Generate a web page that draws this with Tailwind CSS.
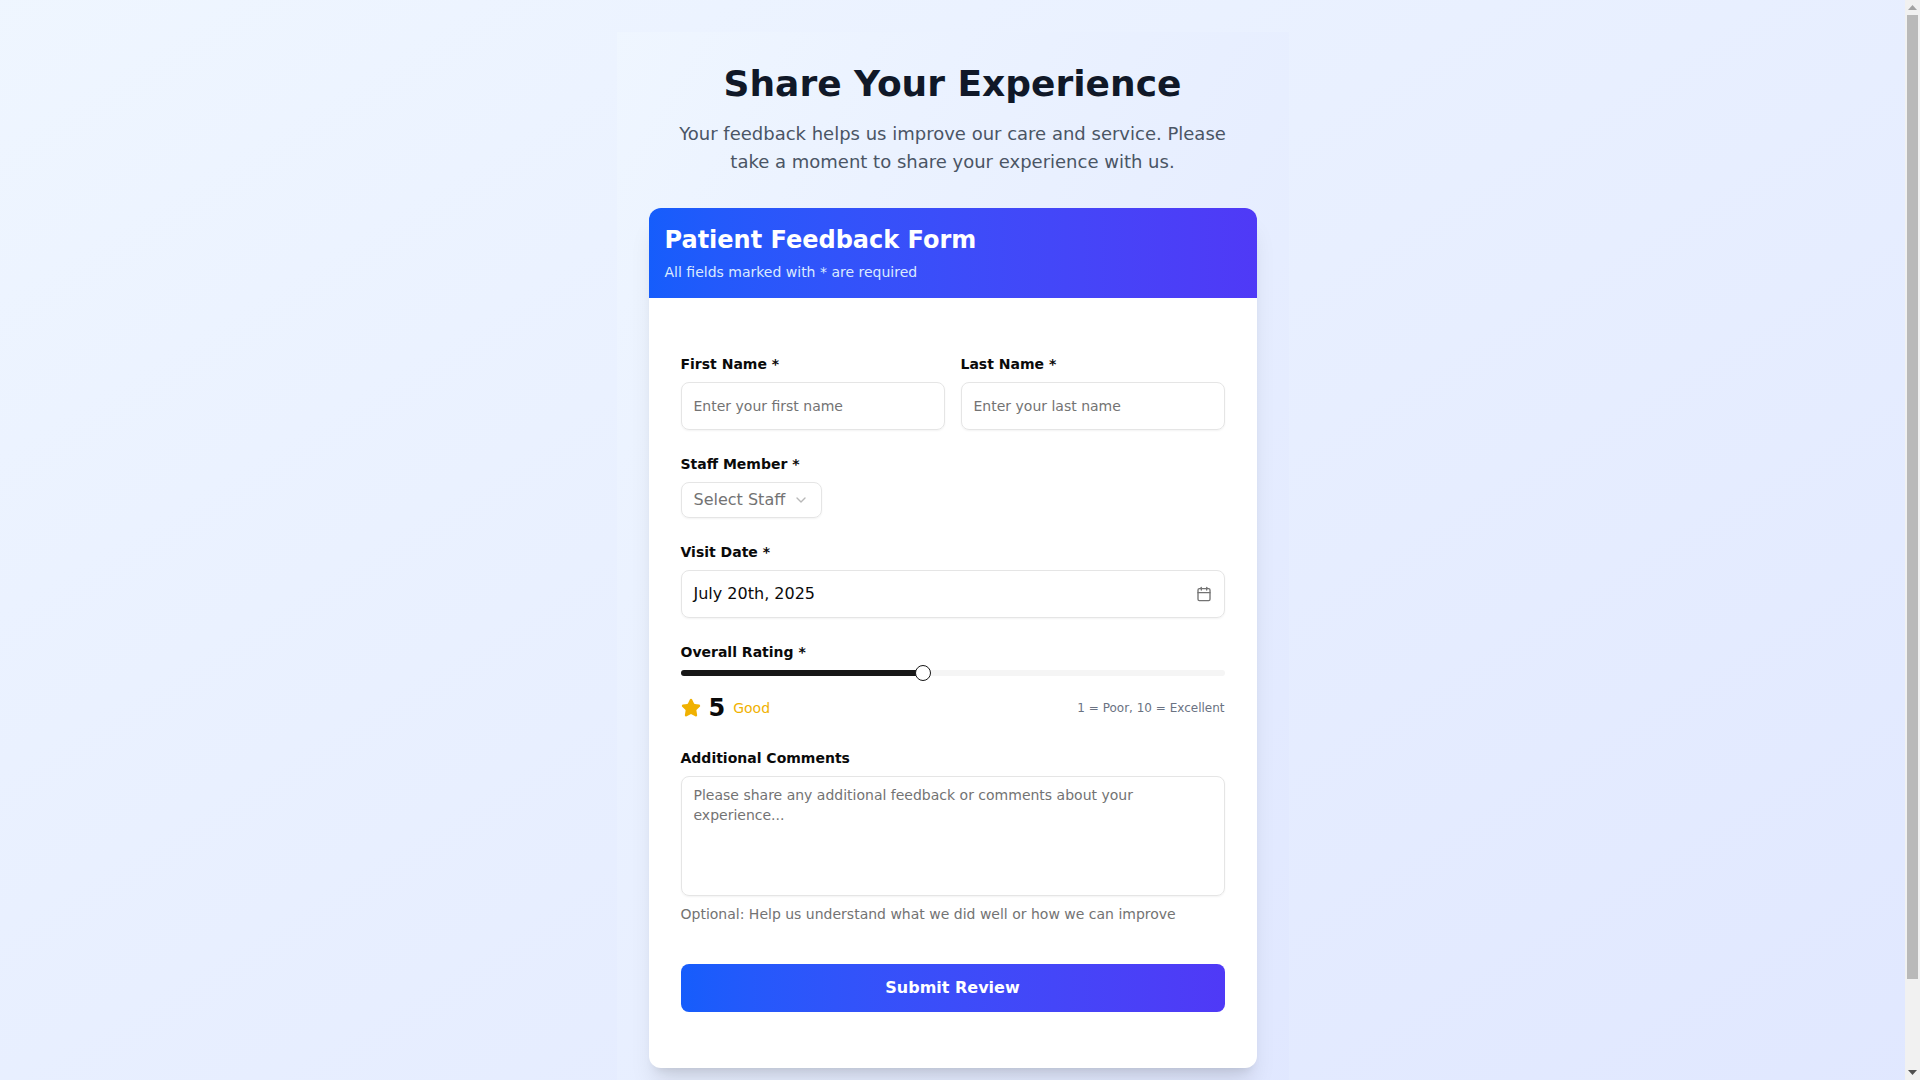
<!DOCTYPE html>
<html lang="en">
<head>
    <meta charset="UTF-8">
    <meta name="viewport" content="width=device-width, initial-scale=1.0">
    <title>Patient Feedback</title>
    <script src="https://cdn.jsdelivr.net/npm/@tailwindcss/browser@4"></script>
</head>
<body class="flex h-screen overflow-hidden font-['DejaVu_Sans',sans-serif]">
    <div class="flex-1 min-w-0 h-screen overflow-hidden">
        <div class="bg-gradient-to-br from-blue-50 to-indigo-100 py-8">
            <div class="max-w-2xl mx-auto bg-gradient-to-br from-blue-50 to-indigo-100 px-8 pt-8 pb-[76px]">
                <!-- Heading -->
                <div class="text-center mb-8">
                    <h1 class="text-4xl font-bold text-gray-900 leading-10 mb-4">Share Your Experience</h1>
                    <p class="text-lg text-gray-600 max-w-xl mx-auto leading-7">Your feedback helps us improve our care and service. Please take a moment to share your experience with us.</p>
                </div>

                <!-- Form Card -->
                <div class="bg-white rounded-xl shadow-xl overflow-hidden">
                    <div class="h-[90px] bg-gradient-to-r from-blue-600 to-indigo-600 px-4 pt-4">
                        <h2 class="text-2xl font-bold text-white leading-8">Patient Feedback Form</h2>
                        <p class="text-sm text-blue-100 leading-5 mt-1.5">All fields marked with * are required</p>
                    </div>

                    <form class="px-8 py-14 space-y-6 text-[#0a0a0a]">
                        <div class="grid grid-cols-2 gap-4">
                            <div>
                                <label class="block text-sm font-bold leading-5 mb-2">First Name *</label>
                                <input type="text" placeholder="Enter your first name" class="w-full h-12 px-3 text-sm border border-[#e5e5e5] rounded-lg shadow-xs placeholder:text-[#737373]">
                            </div>
                            <div>
                                <label class="block text-sm font-bold leading-5 mb-2">Last Name *</label>
                                <input type="text" placeholder="Enter your last name" class="w-full h-12 px-3 text-sm border border-[#e5e5e5] rounded-lg shadow-xs placeholder:text-[#737373]">
                            </div>
                        </div>

                        <div>
                            <label class="block text-sm font-bold leading-5 mb-2">Staff Member *</label>
                            <button type="button" class="flex items-center gap-2 h-9 px-3 border border-[#e5e5e5] rounded-lg shadow-xs text-[#737373]">
                                <span>Select Staff</span>
                                <svg class="w-4 h-4 opacity-50" viewBox="0 0 24 24" fill="none" stroke="currentColor" stroke-width="2" stroke-linecap="round" stroke-linejoin="round"><path d="m6 9 6 6 6-6"/></svg>
                            </button>
                        </div>

                        <div>
                            <label class="block text-sm font-bold leading-5 mb-2">Visit Date *</label>
                            <div class="flex items-center justify-between h-12 px-3 border border-[#e5e5e5] rounded-lg shadow-xs">
                                <span>July 20th, 2025</span>
                                <svg class="w-4 h-4 text-[#737373]" viewBox="0 0 24 24" fill="none" stroke="currentColor" stroke-width="2" stroke-linecap="round" stroke-linejoin="round"><path d="M8 2v4"/><path d="M16 2v4"/><rect width="18" height="18" x="3" y="4" rx="2"/><path d="M3 10h18"/></svg>
                            </div>
                        </div>

                        <div>
                            <label class="block text-sm font-bold leading-5">Overall Rating *</label>
                            <div class="relative flex items-center h-4 mt-[3px]">
                                <div class="w-full h-1.5 rounded-full bg-[#f5f5f5] overflow-hidden">
                                    <div class="h-full bg-[#171717]" style="width: 44.5%"></div>
                                </div>
                                <div class="absolute left-[44.5%] -ml-2 w-4 h-4 rounded-full bg-white border border-[#171717]"></div>
                            </div>
                            <div class="flex items-center justify-between mt-[11px]">
                                <div class="flex items-center gap-2">
                                    <svg class="w-5 h-5 text-yellow-500" viewBox="0 0 24 24" fill="currentColor" stroke="currentColor" stroke-width="2" stroke-linecap="round" stroke-linejoin="round"><path d="M11.525 2.295a.53.53 0 0 1 .95 0l2.31 4.679a2.123 2.123 0 0 0 1.595 1.16l5.166.756a.53.53 0 0 1 .294.904l-3.736 3.638a2.123 2.123 0 0 0-.611 1.878l.882 5.14a.53.53 0 0 1-.771.56l-4.618-2.428a2.122 2.122 0 0 0-1.973 0L6.396 21.01a.53.53 0 0 1-.77-.56l.881-5.139a2.122 2.122 0 0 0-.611-1.879L2.16 9.795a.53.53 0 0 1 .294-.906l5.165-.755a2.122 2.122 0 0 0 1.597-1.16z"/></svg>
                                    <span class="text-2xl font-bold leading-8">5</span>
                                    <span class="text-sm text-yellow-500">Good</span>
                                </div>
                                <span class="text-xs text-gray-500">1 = Poor, 10 = Excellent</span>
                            </div>
                        </div>

                        <div>
                            <label class="block text-sm font-bold leading-5 mb-2">Additional Comments</label>
                            <textarea placeholder="Please share any additional feedback or comments about your experience..." class="block w-full h-[120px] px-3 py-2 text-sm leading-5 border border-[#e5e5e5] rounded-lg shadow-xs resize-none placeholder:text-[#737373]"></textarea>
                            <p class="text-sm leading-5 text-[#737373] mt-2">Optional: Help us understand what we did well or how we can improve</p>
                        </div>

                        <button type="button" class="block w-full h-12 !mt-10 rounded-lg bg-gradient-to-r from-blue-600 to-indigo-600 text-white font-bold">Submit Review</button>
                    </form>
                </div>
            </div>
        </div>
    </div>

    <!-- Scrollbar -->
    <div class="flex flex-col w-[15px] h-screen shrink-0 bg-[#f1f1f1]">
        <div class="flex items-center justify-center h-[15px]">
            <svg class="w-[9px] h-[5px] text-[#a3a3a3]" viewBox="0 0 9 5" fill="currentColor"><path d="M4.5 0 9 5H0z"/></svg>
        </div>
        <div class="h-[964px] mx-[2px] bg-[#b9b9b9]"></div>
        <div class="flex-1"></div>
        <div class="flex items-center justify-center h-[15px]">
            <svg class="w-[9px] h-[5px] text-[#505050]" viewBox="0 0 9 5" fill="currentColor"><path d="M0 0h9L4.500 5z"/></svg>
        </div>
    </div>
</body>
</html>
